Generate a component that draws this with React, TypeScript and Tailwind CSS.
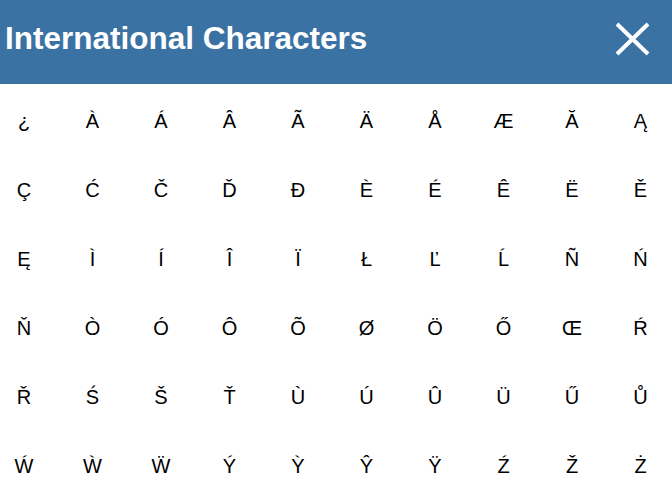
import React from "react";

const chars = [
  "¿", "À", "Á", "Â", "Ã", "Ä", "Å", "Æ", "Ă", "Ą",
  "Ç", "Ć", "Č", "Ď", "Đ", "È", "É", "Ê", "Ë", "Ě",
  "Ę", "Ì", "Í", "Î", "Ï", "Ł", "Ľ", "Ĺ", "Ñ", "Ń",
  "Ň", "Ò", "Ó", "Ô", "Õ", "Ø", "Ö", "Ő", "Œ", "Ŕ",
  "Ř", "Ś", "Š", "Ť", "Ù", "Ú", "Û", "Ü", "Ű", "Ů",
  "Ẃ", "Ẁ", "Ẅ", "Ý", "Ỳ", "Ŷ", "Ÿ", "Ź", "Ž", "Ż",
];

export default function App() {
  return (
    <div className="w-[672px] h-[495px] overflow-hidden bg-white font-['Liberation_Sans',Arial,sans-serif]">
      {/* Header */}
      <div className="h-[84px] bg-[#3b72a4] flex items-center justify-between pl-[5px] pr-[20px]">
        <h1 className="text-white font-bold text-[31.5px] leading-none -mt-[6px]">
          International Characters
        </h1>
        <button className="w-[40px] h-[40px] flex items-center justify-center -mt-[7px]">
          <svg width="37" height="36" viewBox="0 0 37 36">
            <path d="M3 3 L34 33 M34 3 L3 33" stroke="white" strokeWidth="4" fill="none" />
          </svg>
        </button>
      </div>

      {/* Character grid */}
      <div className="grid grid-cols-[repeat(10,48px)] gap-x-[20.5px] gap-y-[21px] pt-[13px]">
        {chars.map((c) => (
          <button
            key={c}
            className="h-[48px] flex items-center justify-center text-[20px] text-black"
          >
            {c}
          </button>
        ))}
      </div>
    </div>
  );
}
